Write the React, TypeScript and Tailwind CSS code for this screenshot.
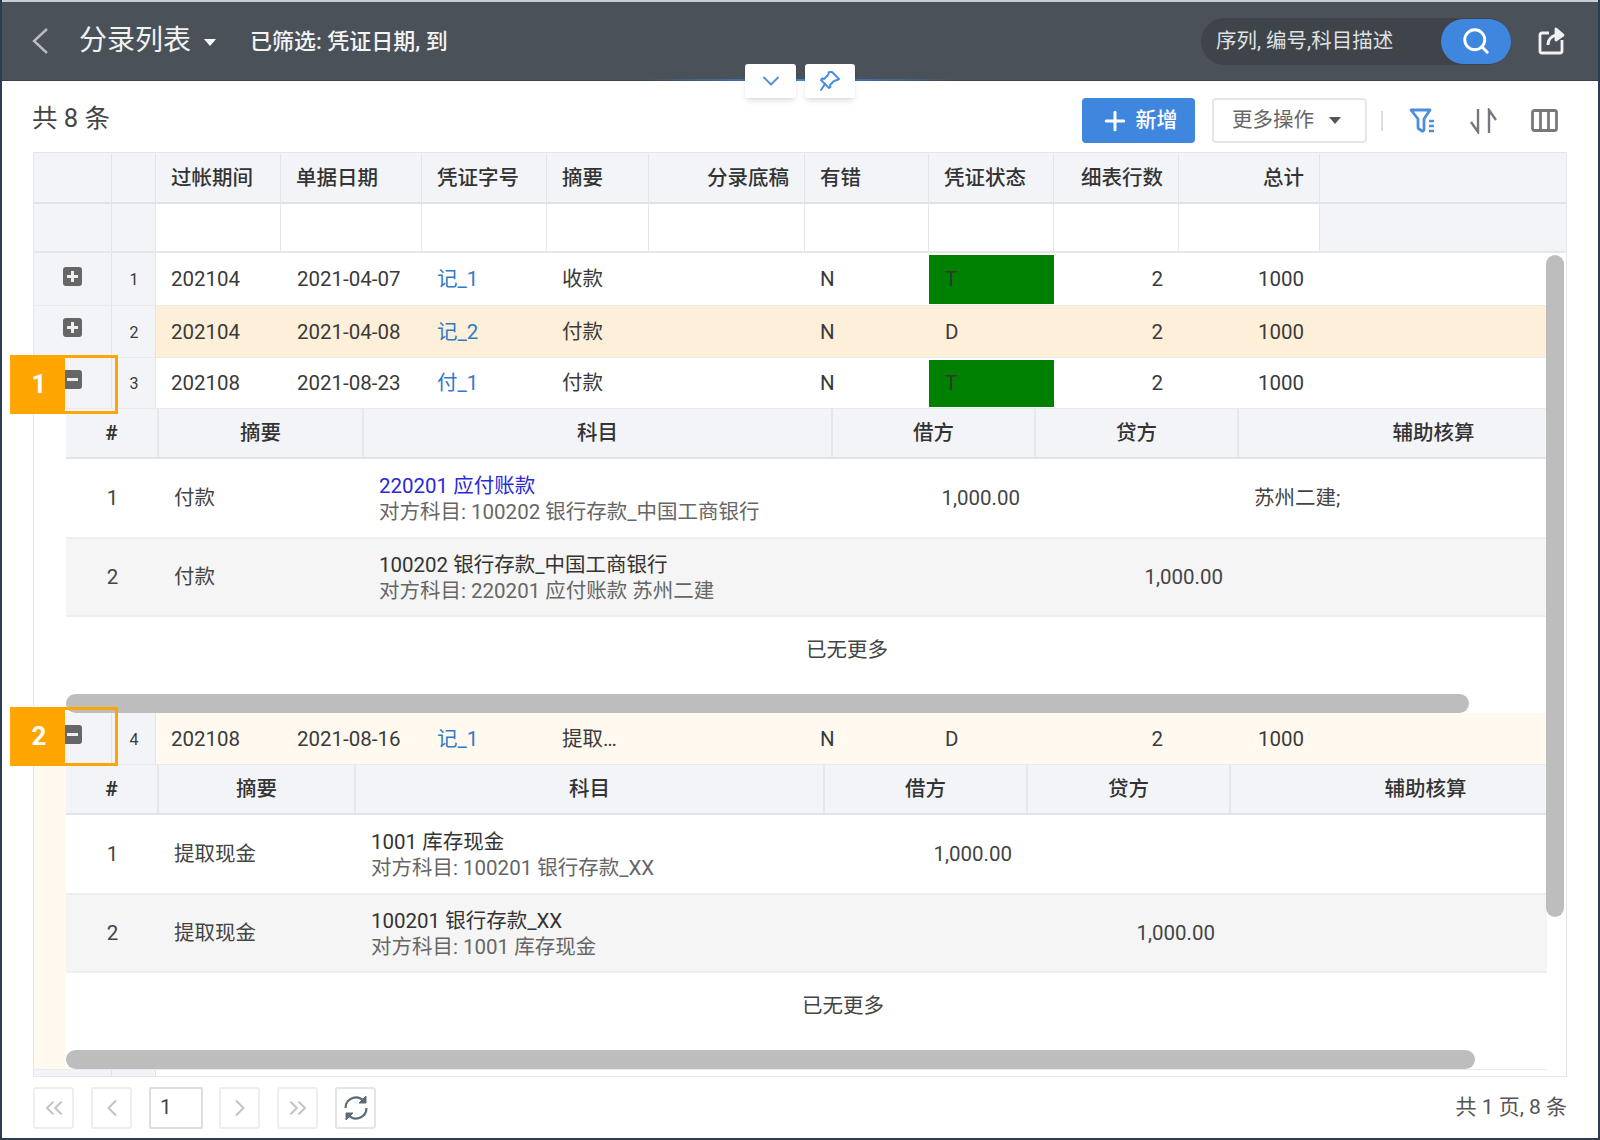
import React from 'react';
import { ChevronDown, ChevronLeft, ChevronRight, ChevronsLeft, ChevronsRight, Plus, Search } from 'lucide-react';

const cols = 'grid grid-cols-[78px_44px_125px_141px_125px_102px_156px_124px_125px_125px_141px_1fr]';

const headers: [string, string][] = [
  ['过帐期间', 'text-left'], ['单据日期', 'text-left'], ['凭证字号', 'text-left'], ['摘要', 'text-left'],
  ['分录底稿', 'text-right'], ['有错', 'text-left'], ['凭证状态', 'text-left'], ['细表行数', 'text-right'], ['总计', 'text-right'],
];

function Toggle({ open, lift }: { open: boolean; lift: string }) {
  return (
    <span className={`relative ${lift} block h-[19px] w-[19px] rounded-[3px] bg-[#666666]`}>
      <span className="absolute left-[4px] top-[8px] h-[3px] w-[11px] bg-[#eeeeee]" />
      {!open && <span className="absolute left-[8px] top-[4px] h-[11px] w-[3px] bg-[#eeeeee]" />}
    </span>
  );
}

type RowProps = { n: number; period: string; date: string; no: string; memo: string; status: string; open: boolean; bg: string; green: boolean; h: string; lift: string };

function Row({ n, period, date, no, memo, status, open, bg, green, h, lift }: RowProps) {
  return (
    <div className={`${cols} ${h} ${bg} border-b border-[#e8eaee] text-[20.5px] text-[#3a3a3a]`}>
      <div className="flex items-center justify-center border-r border-[#e0e3e8] bg-[#f2f4f8]"><Toggle open={open} lift={lift} /></div>
      <div className="flex items-center justify-center border-r border-[#e0e3e8] bg-[#f2f4f8] pt-[2px] pl-[1px] text-[16px]">{n}</div>
      <div className="flex items-center pt-[1px] pl-[15px]">{period}</div>
      <div className="flex items-center pt-[1px] pl-4">{date}</div>
      <div className="flex items-center pt-[1px] pl-[15px] text-[#2f7ac6]">{no}</div>
      <div className="flex items-center pt-[1px] pl-[15px]">{memo}</div>
      <div />
      <div className="flex items-center pt-[1px] pl-[15px]">N</div>
      <div className={`flex items-center pl-4 ${green ? 'mt-[2px] mb-[1px] bg-[#008000] text-[#2c3a2c]' : 'pt-[1px]'}`}>{status}</div>
      <div className="flex items-center justify-end pt-[1px] pr-4">2</div>
      <div className="flex items-center justify-end pt-[1px] pr-4">1000</div>
      <div />
    </div>
  );
}

type Line = { seq: number; memo: string; title: string; sub: string; debit?: string; credit?: string; aux?: string; titleBlue?: boolean };

function SubTable({ grid, width, lines }: { grid: string; width: string; lines: Line[] }) {
  const titles = ['#', '摘要', '科目', '借方', '贷方', '辅助核算'];
  return (
    <div className="h-[304px] overflow-hidden bg-white">
      <div className={width}>
        <div className={`${grid} h-[50px] border-b-2 border-[#e0e3e8] bg-[#f2f4f8] text-[20.5px] font-medium text-[#333333]`}>
          {titles.map((t, i) => (
            <div key={t} className={`flex items-center justify-center ${i === 0 ? 'font-bold' : ''} ${i < 5 ? 'border-r-2 border-[#e4e7ec]' : ''}`}>{t}</div>
          ))}
        </div>
        {lines.map((l) => (
          <div key={l.seq} className={`${grid} ${l.seq === 1 ? 'h-[80px]' : 'h-[78px] bg-[#f5f5f5]'} border-b-2 border-[#eeeeee] text-[20.5px] text-[#444444]`}>
            <div className="flex items-center justify-center">{l.seq}</div>
            <div className="flex items-center pl-[15px]">{l.memo}</div>
            <div className="flex flex-col justify-center pt-[1px] pl-[15px] leading-[26px]">
              <span className={l.titleBlue ? 'text-[#2a2ad6]' : 'text-[#333333]'}>{l.title}</span>
              <span className="text-[#666666]">{l.sub}</span>
            </div>
            <div className="flex items-center justify-end pr-4">{l.debit}</div>
            <div className="flex items-center justify-end pr-4">{l.credit}</div>
            <div className="flex items-center pl-[15px]">{l.aux}</div>
          </div>
        ))}
        <div className="flex h-[66px] items-center justify-center text-[20.5px] text-[#444444]">已无更多</div>
      </div>
    </div>
  );
}

function Mark({ label, top }: { label: string; top: string }) {
  return (
    <div className={`absolute left-[8px] ${top} flex h-[59px] w-[108px] border-[3px] border-[#ffa500]`}>
      <div className="flex w-[52px] items-center justify-center bg-[#ffa500] text-[26px] font-bold text-white">{label}</div>
    </div>
  );
}

function PageBtn({ children, dark }: { children: React.ReactNode; dark?: boolean }) {
  return (
    <div className={`flex h-[42px] w-[41px] items-center justify-center rounded-[3px] border-2 ${dark ? 'border-[#e4e4e4] text-[#5b6b7b]' : 'border-[#eeeeee] text-[#c4c4c4]'}`}>
      {children}
    </div>
  );
}

export default function App() {
  const font = "font-[Roboto,'Noto_Sans_CJK_SC',sans-serif]";
  return (
    <div className={`${font} relative flex h-[1140px] w-[1600px] flex-col overflow-hidden border-x-2 border-b-2 border-[#2b3d4f] bg-white`}>
      {/* top bar */}
      <header className="relative flex h-[81px] shrink-0 items-center border-t-2 border-b border-t-[#c9ced3] border-b-[#3c4248] bg-[#4a5158] pr-[33px] pl-[29px] text-white">
        <svg width="18" height="28" viewBox="0 0 18 28" fill="none" stroke="#b9bdc1" strokeWidth="2.4"><path d="M16 2 3 14l13 12" /></svg>
        <span className="ml-[30px] text-[28px] text-[#f2f2f2]">分录列表</span>
        <span className="mt-[2px] ml-[13px] h-0 w-0 border-x-[6px] border-t-[7px] border-x-transparent border-t-white" />
        <span className="ml-[34px] text-[22px] font-medium text-[#f4f4f4]">已筛选: 凭证日期, 到</span>
        <div className="ml-auto flex h-[47px] w-[310px] items-center justify-between rounded-full bg-[#3e444a] pl-[15px] text-[20.5px] text-[#dfe1e3]">
          <span>序列, 编号,科目描述</span>
          <span className="flex h-[45px] w-[70px] items-center justify-center rounded-full bg-[#3f86de]"><Search size={30} strokeWidth={2.3} color="#ffffff" /></span>
        </div>
        <svg className="ml-[26px]" width="28" height="28" viewBox="0 0 28 28" fill="none" stroke="#f2f2f2" strokeWidth="2.8" strokeLinejoin="round">
          <path d="M12 6H5a2 2 0 0 0-2 2v16a2 2 0 0 0 2 2h18a2 2 0 0 0 2-2V13" />
          <path d="M11 18c0-6 4-10 11-10" />
          <path d="M19 2l7 6-7 5Z" fill="#f2f2f2" />
        </svg>
        <div className="absolute right-[640px] -bottom-[1px] left-[640px] h-[2px] bg-gradient-to-r from-transparent via-[#3f86de] to-transparent" />
      </header>
      <div className="absolute top-[64px] left-[743px] flex gap-[9px]">
        <div className="flex h-[34px] w-[51px] items-center justify-center rounded-[3px] bg-white shadow-md"><ChevronDown size={28} strokeWidth={1.7} color="#5a90d6" /></div>
        <div className="flex h-[34px] w-[50px] items-center justify-center rounded-[3px] bg-white shadow-md">
          <svg width="22" height="22" viewBox="0 0 22 22" fill="none" stroke="#4a8ee0" strokeWidth="2" strokeLinejoin="round" strokeLinecap="round">
            <path d="M13 2l7 7-2 1-3 1-4 4 .5 2-1.5 1-8-8 1-1.5 2 .5 4-4 1-3Z" /><path d="M6 14l-4 6" />
          </svg>
        </div>
      </div>

      {/* toolbar */}
      <div className="flex h-[71px] shrink-0 items-center pt-[8px] pr-[40px] pl-[30px]">
        <span className="mb-[4px] text-[25.5px] text-[#444444]">共 8 条</span>
        <div className="ml-auto flex h-[45px] w-[113px] items-center justify-center gap-[6px] rounded-[4px] bg-[#3f86de] text-[21px] font-medium text-white"><Plus size={30} strokeWidth={2.4} />新增</div>
        <div className="ml-[17px] flex h-[45px] w-[155px] items-center gap-[15px] rounded-[4px] border-2 border-[#e6e6e6] pl-[18px] text-[20.5px] text-[#666666]">
          更多操作<span className="h-0 w-0 border-x-[6px] border-t-[7px] border-x-transparent border-t-[#555555]" />
        </div>
        <div className="ml-[14px] h-[20px] w-[2px] bg-[#dddddd]" />
        <svg className="ml-[26px]" width="27" height="26" viewBox="0 0 27 26" fill="none" stroke="#4a8ee0" strokeWidth="2.8" strokeLinejoin="round">
          <path d="M2 2h19l-6 9v11a1.5 1.5 0 0 1-2 1l-3-2a2 2 0 0 1-1-2v-8Z" />
          <path d="M20 13h5M20 18h5M20 23h5" strokeWidth="2.4" />
        </svg>
        <svg className="ml-[33px]" width="28" height="26" viewBox="0 0 28 26" fill="none" stroke="#75797d" strokeWidth="2.4">
          <path d="M9 1v23L2 14M20 25V2l7 10" />
        </svg>
        <svg className="ml-[34px]" width="27" height="23" viewBox="0 0 27 23" fill="none" stroke="#75797d" strokeWidth="2.8">
          <rect x="1.5" y="1.5" width="24" height="20" rx="2" /><path d="M9.5 2v19M17.5 2v19" />
        </svg>
      </div>

      {/* table */}
      <div className="mx-[31px] flex h-[925px] shrink-0 flex-col border border-[#e4e6ea]">
        <div className={`${cols} h-[51px] shrink-0 border-b-2 border-[#dfe2e6] bg-[#f2f4f8] pt-[1px] text-[20.5px] font-medium text-[#333333]`}>
          <div className="border-r border-[#e0e3e8]" />
          <div className="border-r border-[#e0e3e8]" />
          {headers.map(([t, a]) => (
            <div key={t} className={`flex items-center border-r border-[#e0e3e8] px-[15px] ${a === 'text-right' ? 'justify-end' : ''}`}>{t}</div>
          ))}
          <div />
        </div>
        <div className={`${cols} h-[49px] shrink-0 border-b-2 border-[#e4e6ea]`}>
          <div className="border-r border-[#e0e3e8] bg-[#f2f4f8]" />
          <div className="border-r border-[#e0e3e8] bg-[#f2f4f8]" />
          {headers.map(([t]) => <div key={t} className="border-r border-[#e4e6ea] bg-white" />)}
          <div className="bg-[#f2f4f8]" />
        </div>
        <div className="relative flex min-h-0 flex-1 flex-col overflow-hidden pr-[19px]">
          <Row n={1} period="202104" date="2021-04-07" no="记_1" memo="收款" status="T" open={false} bg="bg-white" green h="h-[53px]" lift="mb-[5px]" />
          <Row n={2} period="202104" date="2021-04-08" no="记_2" memo="付款" status="D" open={false} bg="bg-[#feefd8]" green={false} h="h-[52px]" lift="mb-[9px]" />
          <Row n={3} period="202108" date="2021-08-23" no="付_1" memo="付款" status="T" open bg="bg-white" green h="h-[51px]" lift="mb-[8px]" />
          <div className="relative h-[304px] shrink-0 pl-[32px]">
            <SubTable
              grid="grid grid-cols-[93px_205px_469px_203px_203px_389px]"
              width="w-[1562px]"
              lines={[
                { seq: 1, memo: '付款', title: '220201 应付账款', titleBlue: true, sub: '对方科目: 100202 银行存款_中国工商银行', debit: '1,000.00', aux: '苏州二建;' },
                { seq: 2, memo: '付款', title: '100202 银行存款_中国工商银行', sub: '对方科目: 220201 应付账款 苏州二建', credit: '1,000.00' },
              ]}
            />
            <div className="absolute bottom-0 left-[32px] h-[19px] w-[1403px] rounded-full bg-[#bdbdbd]" />
          </div>
          <Row n={4} period="202108" date="2021-08-16" no="记_1" memo="提取…" status="D" open bg="bg-[#fff9f0]" green={false} h="h-[52px]" lift="mb-[9px]" />
          <div className="relative h-[304px] shrink-0 bg-[#fff9f0] pl-[32px]">
            <SubTable
              grid="grid grid-cols-[93px_197px_469px_203px_203px_389px]"
              width="w-[1554px]"
              lines={[
                { seq: 1, memo: '提取现金', title: '1001 库存现金', sub: '对方科目: 100201 银行存款_XX', debit: '1,000.00' },
                { seq: 2, memo: '提取现金', title: '100201 银行存款_XX', sub: '对方科目: 1001 库存现金', credit: '1,000.00' },
              ]}
            />
            <div className="absolute bottom-0 left-[32px] h-[19px] w-[1409px] rounded-full bg-[#bdbdbd]" />
          </div>
          <div className={`${cols} min-h-0 flex-1 border-t border-[#e8eaee]`}>
            <div className="border-r border-[#e0e3e8] bg-[#f2f4f8]" />
            <div className="border-r border-[#e0e3e8] bg-[#f2f4f8]" />
          </div>
          <div className="absolute top-[2px] right-[2px] h-[662px] w-[18px] rounded-full bg-[#bdbdbd]" />
        </div>
      </div>

      {/* pager */}
      <div className="flex min-h-0 flex-1 items-center pr-[31px] pl-[31px]">
        <PageBtn><ChevronsLeft size={28} strokeWidth={1.8} /></PageBtn>
        <div className="ml-[17px]"><PageBtn><ChevronLeft size={28} strokeWidth={1.8} /></PageBtn></div>
        <div className="ml-[17px] flex h-[42px] w-[54px] items-center rounded-[2px] border-2 border-[#dddddd] pl-[9px] text-[20.5px] text-[#444444]">1</div>
        <div className="ml-[16px]"><PageBtn><ChevronRight size={28} strokeWidth={1.8} /></PageBtn></div>
        <div className="ml-[17px]"><PageBtn><ChevronsRight size={28} strokeWidth={1.8} /></PageBtn></div>
        <div className="ml-[17px]">
          <PageBtn dark>
            <svg width="28" height="28" viewBox="0 0 28 28" fill="none" stroke="currentColor" strokeWidth="2.2">
              <path d="M3.5 14a10.5 10.5 0 0 1 18-7.3" />
              <path d="M24.5 14a10.5 10.5 0 0 1-18 7.3" />
              <path d="M24 2v7h-7Z" fill="currentColor" strokeWidth="1" />
              <path d="M4 26v-7h7Z" fill="currentColor" strokeWidth="1" />
            </svg>
          </PageBtn>
        </div>
        <span className="ml-auto text-[21px] text-[#555555]">共 1 页, 8 条</span>
      </div>

      <Mark label="1" top="top-[355px]" />
      <Mark label="2" top="top-[707px]" />
    </div>
  );
}
